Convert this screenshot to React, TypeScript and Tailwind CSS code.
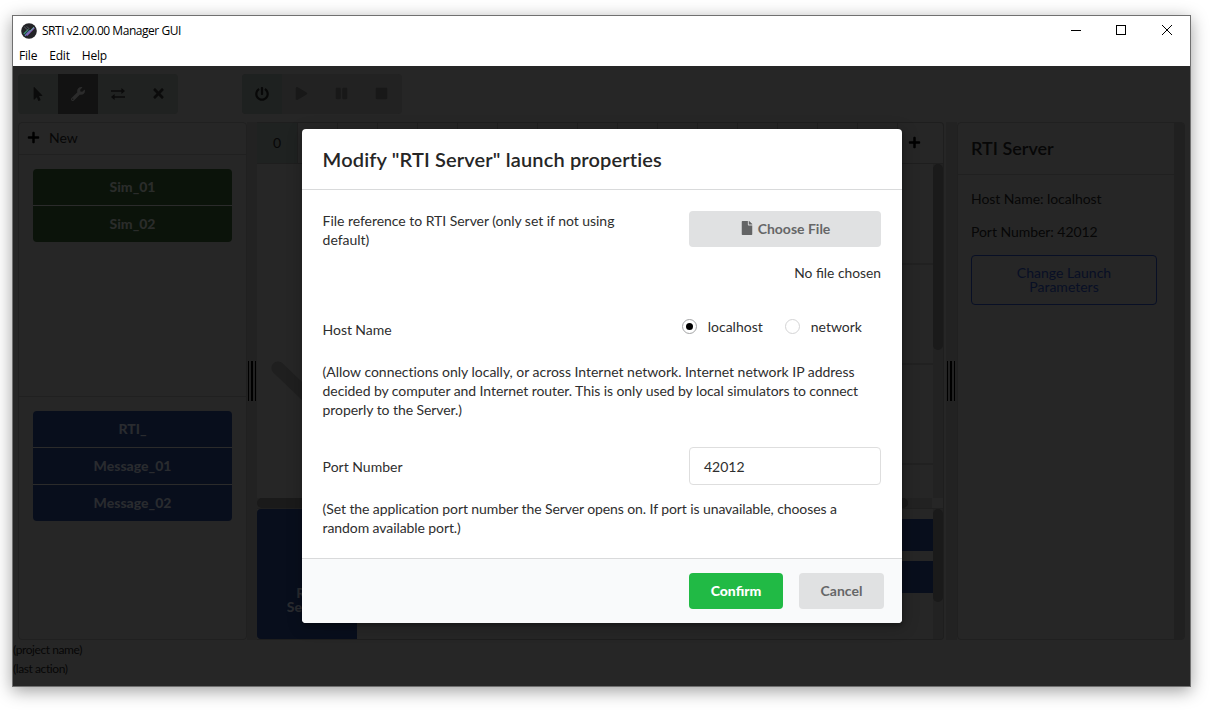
import React from "react";
import {
  FaFile,
  FaMousePointer,
  FaPause,
  FaPlay,
  FaPlus,
  FaPowerOff,
  FaStop,
  FaTimes,
  FaWrench,
} from "react-icons/fa";

function ExchangeIcon() {
  return (
    <svg width="14" height="12" viewBox="0 0 14 12" fill="currentColor">
      <path d="M0 2.3h10.4V0L14 3l-3.6 3V3.8H0z" />
      <path d="M14 9.7H3.6V12L0 9l3.6-3v2.2H14z" />
    </svg>
  );
}

function AppLogo() {
  return (
    <svg width="16" height="16" viewBox="0 0 16 16">
      <circle cx="8" cy="8" r="7.8" fill="#232327" />
      <path d="M2.8 11 7.4 6.4" stroke="#3f9c78" strokeWidth="1.2" />
      <path d="M4 12.8 9 7.6" stroke="#5b7fc0" strokeWidth="1.4" />
      <path d="M5.6 12.4 13.2 4.6" stroke="#8a63b8" strokeWidth="1.7" />
      <path d="M9 8.2 13 4" stroke="#58b59a" strokeWidth="0.9" />
      <path d="M3.2 3.8 7 7.4M5.8 3.4 8.4 6" stroke="#5d646c" strokeWidth="0.9" />
    </svg>
  );
}

function ToolButton({ children, className = "" }: { children: React.ReactNode; className?: string }) {
  return <div className={`flex h-10 w-10 items-center justify-center ${className}`}>{children}</div>;
}

function Gutter({ className }: { className: string }) {
  return (
    <div className={`flex shrink-0 items-center gap-[2px] bg-[#222222] pl-px ${className}`}>
      <span className="h-10 w-px bg-black" />
      <span className="h-10 w-[2px] bg-black" />
      <span className="h-10 w-px bg-black" />
    </div>
  );
}

function StackButtons({ labels, className }: { labels: string[]; className: string }) {
  return (
    <div className="flex flex-col gap-px overflow-hidden rounded bg-[#2b2b2b]">
      {labels.map((label) => (
        <div key={label} className={`flex h-9 items-center justify-center pb-[2px] font-black ${className}`}>
          {label}
        </div>
      ))}
    </div>
  );
}

function TitleBar() {
  return (
    <div className="h-[50px] bg-white font-['Open_Sans',sans-serif] text-[12px] text-black">
      <div className="flex h-[30px] items-center pl-2">
        <AppLogo />
        <span className="ml-[5px] tracking-[-0.46px]">SRTI v2.00.00 Manager GUI</span>
        <svg className="mr-4 mb-[2px] ml-auto" width="103" height="12" viewBox="0 0 103 12" fill="none" stroke="#000">
          <path d="M0 6.5h10" />
          <rect x="45.5" y="1.5" width="9" height="9" />
          <path d="m91 1 10 10m0-10-10 10" />
        </svg>
      </div>
      <div className="flex h-5 items-center gap-3 pl-[6px] tracking-[-0.2px]">
        <span>File</span>
        <span>Edit</span>
        <span>Help</span>
      </div>
    </div>
  );
}

function Toolbar() {
  return (
    <div className="flex gap-16 pt-2 pl-[5px] text-[#0b0b0b]">
      <div className="flex overflow-hidden rounded bg-[#202221]">
        <ToolButton className="pr-px"><FaMousePointer size={14} /></ToolButton>
        <ToolButton className="bg-[#121212] pr-px pb-px text-[#2b2b2b]"><FaWrench size={14} /></ToolButton>
        <ToolButton><ExchangeIcon /></ToolButton>
        <ToolButton className="pb-px"><FaTimes size={15} /></ToolButton>
      </div>
      <div className="flex overflow-hidden rounded bg-[#222222] text-[#181818]">
        <ToolButton className="bg-[#1e2120] pr-px pb-px text-[#080808]"><FaPowerOff size={14} /></ToolButton>
        <ToolButton className="pr-[2px] pb-px"><FaPlay size={13} /></ToolButton>
        <ToolButton className="pr-[2px] pb-px"><FaPause size={13} /></ToolButton>
        <ToolButton className="pr-[2px] pb-px"><FaStop size={13} /></ToolButton>
      </div>
    </div>
  );
}

function LeftPanel() {
  return (
    <div className="flex w-[229px] shrink-0 flex-col rounded border border-[#202020]">
      <div className="flex h-8 items-center gap-[9px] border-b border-[#202020] pb-[2px] pl-2">
        <FaPlus size={13} className="text-black" />
        <span>New</span>
      </div>
      <div className="h-[242px] border-b border-[#202020] px-[14px] pt-[14px]">
        <StackButtons labels={["Sim_01", "Sim_02"]} className="bg-[#0b130a] text-[#2a2c2a]" />
      </div>
      <div className="px-[14px] pt-[14px]">
        <StackButtons labels={["RTI_", "Message_01", "Message_02"]} className="bg-[#080e1c] text-[#292b2f]" />
      </div>
    </div>
  );
}

function CenterPanel() {
  const columns = Array.from({ length: 15 }, (_, i) => i + 1);
  return (
    <div className="mr-[2px] flex w-[687px] shrink-0 flex-col overflow-hidden rounded-r border border-l-0 border-[#1e1e1e]">
      <div className="flex h-[41px] border-b border-[#1e1e1e]">
        <div className="flex w-[41px] shrink-0 items-center justify-center border-r border-[#1e1e1e] bg-[#1f2221] pb-[2px]">0</div>
        {columns.map((c) => (
          <div key={c} className="w-10 shrink-0 border-r border-[#202020]" />
        ))}
        <div className="flex w-8 items-center justify-center pb-px">
          <FaPlus size={13} className="text-black" />
        </div>
      </div>
      <div className="flex h-[334px]">
        <div className="relative w-[676px]">
          <div className="ml-[100px] flex h-full flex-col">
            <div className="h-[101px] border-b-2 border-[#212121]" />
            <div className="h-[100px] border-b-2 border-[#212121]" />
            <div className="h-[100px] border-b-2 border-[#212121]" />
          </div>
          <svg className="absolute top-0 left-0" width="675" height="334" fill="none">
            <path d="M21 204 68 249" stroke="#1f1f1f" strokeWidth="13" strokeLinecap="round" />
          </svg>
        </div>
        <div className="w-[10px] bg-[#222222]">
          <div className="h-[186px] rounded-full bg-[#1a1a1a]" />
        </div>
      </div>
      <div className="h-[10px] w-[675px] bg-[#222222]">
        <div className="h-full w-[651px] rounded-full bg-[#1a1a1a]" />
      </div>
      <div className="flex grow border-t border-[#1f1f1f]">
        <div className="flex w-[100px] items-end justify-center rounded-l bg-[#080e1c] pb-[25px] text-center leading-[14px] font-black text-[#292b2f]">
          <p className="w-[60px]">RTI Server</p>
        </div>
        <div className="flex w-[576px] flex-col gap-[10px] pt-[10px]">
          <div className="h-8 bg-[#080e1c]" />
          <div className="h-8 bg-[#080e1c]" />
        </div>
        <div className="w-[10px] bg-[#222222]">
          <div className="h-[93px] rounded-full bg-[#1a1a1a]" />
        </div>
      </div>
    </div>
  );
}

function RightPanel() {
  return (
    <div className="flex w-[228px] shrink-0 overflow-hidden rounded border border-[#202020]">
      <div className="w-[216px]">
        <div className="flex h-[52px] items-center border-b border-[#202020] pl-[13px] text-[18px] font-semibold text-[#070707]">
          RTI Server
        </div>
        <div className="px-[13px] pt-[14px]">
          <p className="leading-5 tracking-[-0.05px]">Host Name: localhost</p>
          <p className="mt-[13px] leading-5 tracking-[-0.05px]">Port Number: 42012</p>
          <div className="mt-[13px] flex h-[50px] w-[186px] items-center justify-center rounded border border-[#080f25] px-8 text-center leading-[14px] text-[#080f25]">
            Change Launch Parameters
          </div>
        </div>
      </div>
      <div className="grow bg-[#202020]" />
    </div>
  );
}

function LaunchDialog() {
  return (
    <div className="absolute top-[129px] left-[302px] flex h-[494px] w-[600px] flex-col overflow-hidden rounded bg-white text-[14px] leading-[19px] text-[#2e2e2e] shadow-[1px_3px_3px_0_rgba(0,0,0,0.2),1px_3px_15px_2px_rgba(0,0,0,0.2)]">
      <div className="flex h-[61px] items-center border-b border-[#d9dadb] pl-[20.6px] text-[20px] font-semibold tracking-[0.14px] text-[#262626]">
        Modify "RTI Server" launch properties
      </div>
      <div className="h-[368px] pt-5 pr-[21px] pl-[20.6px]">
        <div className="flex h-[100px] justify-between">
          <p className="w-[310px] pt-px tracking-[-0.04px]">File reference to RTI Server (only set if not using default)</p>
          <div className="w-[192px] pt-px">
            <div className="flex h-9 items-center justify-center gap-1 rounded bg-[#e0e1e2] pb-[2px] font-bold text-[#666768]">
              <FaFile size={14} className="text-[#636465]" />
              Choose File
            </div>
            <p className="mt-4 text-right text-[13.8px]">No file chosen</p>
          </div>
        </div>
        <div className="flex h-[52px] justify-between pr-[19px]">
          <span className="pt-[10px] tracking-[-0.06px]">Host Name</span>
          <div className="flex items-start gap-[22px] pt-[7px]">
            <label className="flex items-center gap-[11px]">
              <span className="flex h-[15px] w-[15px] items-center justify-center rounded-full border border-[#a3a4a5]">
                <span className="h-[7px] w-[7px] rounded-full bg-black" />
              </span>
              localhost
            </label>
            <label className="flex items-center gap-[11px]">
              <span className="h-[15px] w-[15px] rounded-full border border-[#d4d4d5]" />
              network
            </label>
          </div>
        </div>
        <p className="w-[550px]">
          <span className="tracking-[-0.02px]">
            (Allow connections only locally, or across Internet network. Internet network IP address{" "}
          </span>
          <span className="tracking-[-0.07px]">
            decided by computer and Internet router. This is only used by local simulators to connect properly to the
            Server.)
          </span>
        </p>
        <div className="mt-7 flex items-center justify-between">
          <span>Port Number</span>
          <div className="flex h-[38px] w-[192px] items-center rounded border border-[#dedede] pt-px pl-[14px]">42012</div>
        </div>
        <p className="mt-[14px] w-[540px] tracking-[-0.09px]">
          (Set the application port number the Server opens on. If port is unavailable, chooses a random available
          port.)
        </p>
      </div>
      <div className="flex grow justify-end gap-4 border-t border-[#d9dadb] bg-[#f9fafb] pt-[14px] pr-[18px] font-bold">
        <button className="h-9 w-[94px] rounded bg-[#21ba45] pb-[2px] font-black text-white">Confirm</button>
        <button className="h-9 w-[85px] rounded bg-[#e0e1e2] pb-[2px] text-[#666768]">Cancel</button>
      </div>
    </div>
  );
}

export default function App() {
  return (
    <div className="relative h-[710px] w-[1216px] overflow-hidden bg-white pt-[15px] pl-3 font-[Lato,sans-serif] text-[14px] text-[#070707]">
      <div className="flex h-[672px] w-[1179px] flex-col border border-[#707070] bg-[#262626] shadow-[0_4px_16px_rgba(0,0,0,0.38)]">
        <TitleBar />
        <Toolbar />
        <div className="mt-2 flex h-[518px] shrink-0 pl-[5px]">
          <LeftPanel />
          <Gutter className="w-[10px]" />
          <CenterPanel />
          <Gutter className="w-[11px]" />
          <RightPanel />
        </div>
        <div className="text-[12px] leading-[19px] tracking-[-0.42px]">
          <p>(project name)</p>
          <p>(last action)</p>
        </div>
      </div>
      <LaunchDialog />
    </div>
  );
}
